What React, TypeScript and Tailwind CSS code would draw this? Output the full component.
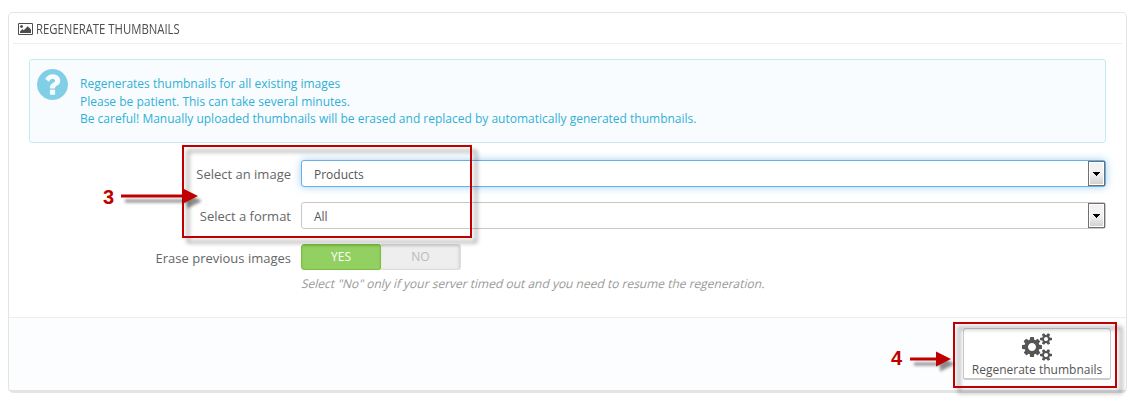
import React from "react";

const SMALL_COG =
  "v140q0 16-149 31-12 27-30 52 51 113 51 138 0 4-4 7-122 71-124 71-8 0-46-47t-52-68q-20 2-30 2t-30-2q-14 21-52 68t-46 47q-2 0-124-71-4-3-4-7 0-25 51-138-18-25-30-52-149-15-149-31v-140q0-16 149-31 13-29 30-52-51-113-51-138 0-4 4-7 4-2 35-20t59-34 30-16q8 0 46 46.5t52 67.5q20-2 30-2t30 2q51-71 92-112l6-2q4 0 124 70 4 3 4 7 0 25-51 138 17 23 30 52 149 15 149 31z";

const COGS =
  "M896 896q0-106-75-181t-181-75-181 75-75 181 75 181 181 75 181-75 75-181zm768 512q0-52-38-90t-90-38-90 38-38 90q0 53 37.5 90.5t90.5 37.5 90.5-37.5 37.5-90.5zm0-1024q0-52-38-90t-90-38-90 38-38 90q0 53 37.5 90.5t90.5 37.5 90.5-37.5 37.5-90.5zm-384 421v185q0 10-7 19.5t-16 10.5l-155 24q-11 35-32 76 34 48 90 115 7 11 7 20 0 12-7 19-23 30-82.5 89.5t-78.5 59.5q-11 0-21-7l-115-90q-37 19-77 31-11 108-23 155-7 24-30 24h-186q-11 0-20-7.5t-10-17.5l-23-153q-34-10-75-31l-118 89q-7 7-20 7-11 0-21-8-144-133-144-160 0-9 7-19 10-14 41-53t47-61q-23-44-35-82l-152-24q-10-1-17-9.5t-7-19.5v-185q0-10 7-19.5t16-10.5l155-24q11-35 32-76-34-48-90-115-7-11-7-20 0-12 7-20 22-30 82-89t79-59q11 0 21 7l115 90q34-18 77-32 11-108 23-154 7-24 30-24h186q11 0 20 7.5t10 17.5l23 153q34 10 75 31l118-89q8-7 20-7 11 0 21 8 144 133 144 160 0 8-7 19-12 16-42 54t-45 60q23 48 34 82l152 23q10 2 17 10.5t7 19.5z" +
  "M1920 1338" + SMALL_COG + "M1920 314" + SMALL_COG;

function PictureIcon() {
  return (
    <svg viewBox="0 128 1920 1536" className="mt-px h-3 w-[15px] shrink-0" fill="currentColor">
      <path d="M640 576q0 80-56 136t-136 56-136-56-56-136 56-136 136-56 136 56 56 136zm1024 384v448h-1408v-192l320-320 160 160 512-512zm96-704h-1600q-13 0-22.5 9.5t-9.5 22.5v1216q0 13 9.5 22.5t22.5 9.5h1600q13 0 22.5-9.5t9.5-22.5v-1216q0-13-9.5-22.5t-22.5-9.5zm160 32v1216q0 66-47 113t-113 47h-1600q-66 0-113-47t-47-113v-1216q0-66 47-113t113-47h1600q66 0 113 47t47 113z" />
    </svg>
  );
}

function QuestionIcon() {
  return (
    <svg viewBox="128 128 1536 1536" className="mt-[9px] ml-[7px] size-[31px] shrink-0 text-[#81cfe6]" fill="currentColor">
      <path d="M1024 1376v-192q0-14-9-23t-23-9h-192q-14 0-23 9t-9 23v192q0 14 9 23t23 9h192q14 0 23-9t9-23zm256-672q0-88-55.5-163t-138.5-116-170-41q-243 0-371 213-15 24 8 42l132 100q7 6 19 6 16 0 25-12 53-68 86-92 34-24 86-24 48 0 85.5 26t37.5 59q0 38-20 61t-68 45q-63 28-115.5 86.5t-52.5 125.5v36q0 14 9 23t23 9h192q14 0 23-9t9-23q0-19 21.5-49.5t54.5-49.5q32-18 49-28.5t46-35 44.5-48 28-60.5 12.5-81zm384 192q0 209-103 385.5t-279.5 279.5-385.5 103-385.5-103-279.5-279.5-103-385.5 103-385.5 279.5-279.5 385.5-103 385.5 103 279.5 279.5 103 385.5z" />
    </svg>
  );
}

function Select({ value, focused = false }: { value: string; focused?: boolean }) {
  return (
    <div
      className={
        "flex h-[27px] w-[805px] justify-between rounded-[3px] border bg-white text-xs text-[#555] " +
        (focused ? "border-[#66afe9] shadow-[0_0_8px_rgba(102,175,233,0.6)]" : "border-[#c8c8c8]")
      }
    >
      <span className="pl-3 leading-[27px]">{value}</span>
      <span className="flex h-[25px] w-[17px] items-center justify-center border border-[#707070] bg-linear-to-b from-[#f2f2f2] from-50% to-[#cfcfcf] shadow-[inset_0_0_0_1px_#fff]">
        <svg viewBox="0 0 7 4" className="h-1 w-[7px]" shapeRendering="crispEdges">
          <path d="M0 0h7v1H6v1H5v1H4v1H3V3H2V2H1V1H0z" />
        </svg>
      </span>
    </div>
  );
}

function Row({ label, children }: { label: string; children: React.ReactNode }) {
  return (
    <div className="flex">
      <label className="w-[282px] pt-px text-right text-[13px] leading-[27px] text-[#666]">{label}</label>
      <div className="ml-[10px]">{children}</div>
    </div>
  );
}

function Arrow({ length, className }: { length: number; className: string }) {
  return (
    <svg
      width={length}
      height="16"
      className={"absolute overflow-visible drop-shadow-[4px_5px_1.5px_rgba(0,0,0,0.45)] " + className}
      fill="#c00000"
    >
      <path d={`M0 6.5H${length - 15}V0.5L${length} 8L${length - 15} 15.5V9.5H0z`} />
    </svg>
  );
}

const number = "absolute font-['Liberation_Sans',sans-serif] text-xl leading-5 font-bold text-[#c00000]";
const frame = "absolute border-2 border-[#c00000] drop-shadow-[5px_5px_2px_rgba(0,0,0,0.42)]";

export default function App() {
  return (
    <div className="relative h-[400px] w-[1133px] overflow-hidden bg-white pt-3 pl-2 font-['Open_Sans',sans-serif]">
      <section className="flex h-[381px] w-[1119px] flex-col overflow-hidden rounded-[5px] border border-b-[3px] border-[#e4e4e4] bg-white">
        <h3 className="mx-1 flex h-[31px] items-center gap-[3px] border-b border-[#eee] pl-[5px] text-[#4d4d4d]">
          <PictureIcon />
          <span className="mt-px origin-left scale-x-[0.81] text-[14px] font-medium whitespace-nowrap">
            REGENERATE THUMBNAILS
          </span>
        </h3>

        <div className="mx-5 mt-[15px] flex h-[84px] w-[1077px] rounded-[3px] border border-[#c5e9f3] bg-[#f8fcff]">
          <QuestionIcon />
          <p className="mt-[15px] ml-3 text-xs leading-[17.6px] whitespace-nowrap text-[#31b0d5]">
            Regenerates thumbnails for all existing images
            <br />
            Please be patient. This can take several minutes.
            <br />
            Be careful! Manually uploaded thumbnails will be erased and replaced by automatically generated thumbnails.
          </p>
        </div>

        <form className="mt-[17px] flex flex-1 flex-col gap-[14px]">
          <Row label="Select an image">
            <Select value="Products" focused />
          </Row>
          <Row label="Select a format">
            <Select value="All" />
          </Row>
          <Row label="Erase previous images">
            <div className="flex h-[26px] w-40 text-center text-xs leading-6">
              <span className="w-20 rounded-l-[3px] rounded-r-[2px] border border-[#7bbf3f] bg-[#92d061] text-white shadow-[inset_0_1px_2px_#7bbf3f]">
                YES
              </span>
              <span className="w-20 rounded-r-[3px] border border-l-0 border-[#ddd] bg-[#eee] text-[#bbb] shadow-[inset_-1px_1px_3px_#d0d0d0]">
                NO
              </span>
            </div>
            <p className="mt-[5px] ml-px -skew-x-[14deg] text-xs leading-[18px] whitespace-nowrap text-[#999]">
              Select "No" only if your server timed out and you need to resume the regeneration.
            </p>
          </Row>
        </form>

        <footer className="flex h-[73px] shrink-0 justify-end border-t border-[#eee] bg-[#fcfdff] pt-[10px] pr-[15px]">
          <button
            type="button"
            className="flex h-[52px] w-[148px] flex-col items-center rounded-[3px] border border-b-2 border-[#ccc] bg-white pt-1 text-xs text-[#555]"
          >
            <svg viewBox="0 0 1920 1792" className="h-7 w-[30px]" fill="currentColor">
              <path d={COGS} />
            </svg>
            <span className="mt-px leading-4 whitespace-nowrap">Regenerate thumbnails</span>
          </button>
        </footer>
      </section>

      <div className={frame + " top-[145px] left-[182px] h-[93px] w-[290px]"} />
      <div className={frame + " top-[322px] left-[953px] h-[66px] w-[164px]"} />
      <span className={number + " top-[187px] left-[103px]"}>3</span>
      <span className={number + " top-[348px] left-[891px]"}>4</span>
      <Arrow length={77} className="top-[188px] left-[121px]" />
      <Arrow length={41} className="top-[351px] left-[910px]" />
    </div>
  );
}
